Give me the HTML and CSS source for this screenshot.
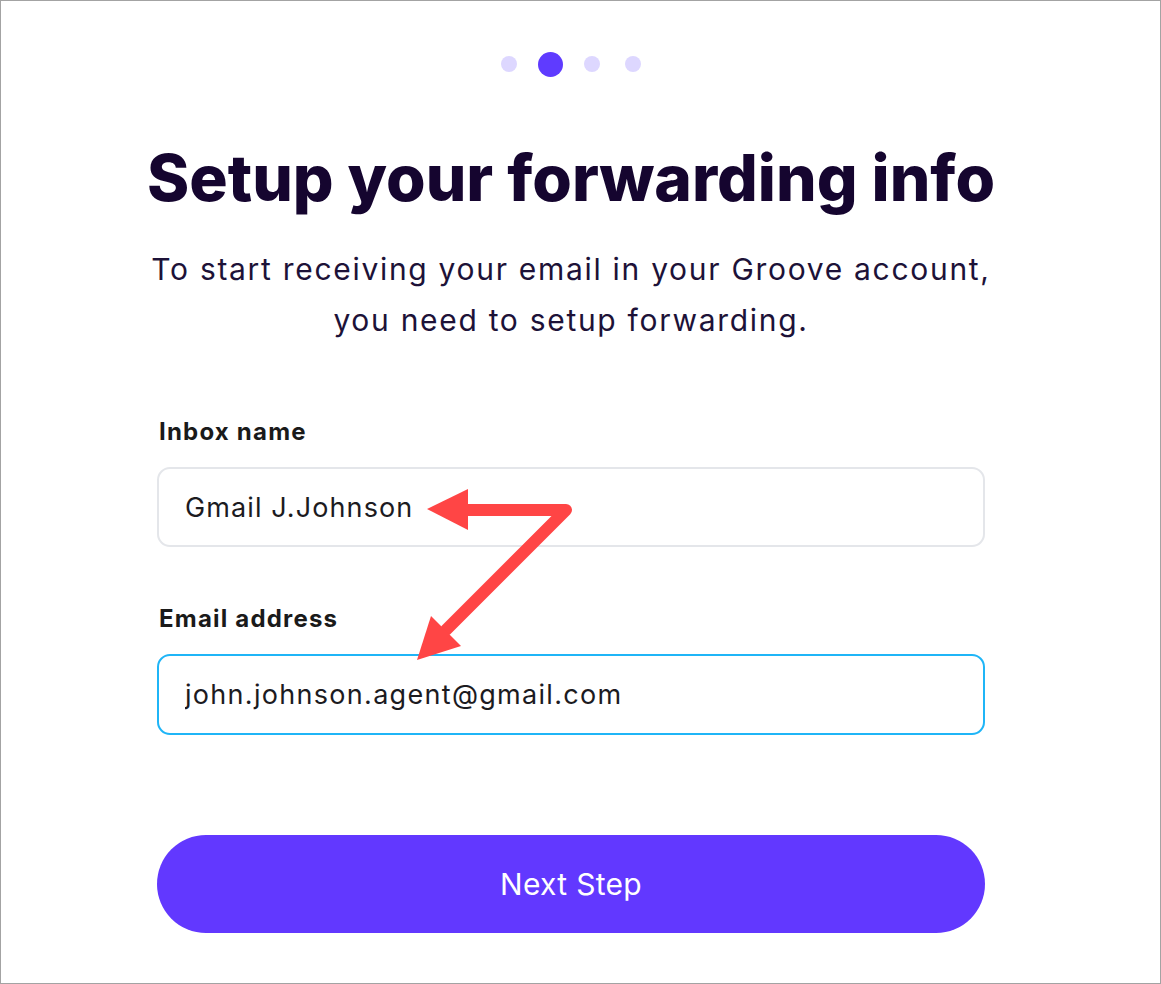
FILE: index.html
```html
<!DOCTYPE html>
<html lang="en">

<head>
    <meta charset="UTF-8">
    <meta name="viewport" content="width=device-width, initial-scale=1.0">
    <title>Setup your forwarding info</title>
    <link rel="stylesheet" href="styles.css">
</head>

<body>

    <div class="frame">
        <div class="wizard">
            <div class="steps">
                <span class="dot"></span>
                <span class="dot active"></span>
                <span class="dot"></span>
                <span class="dot"></span>
            </div>

            <h1>Setup your forwarding info</h1>
            <p class="lead">To start receiving your email in your Groove account,<br>you need to setup forwarding.</p>

            <form class="form">
                <label for="inbox">Inbox name</label>
                <input type="text" id="inbox" value="Gmail J.Johnson">

                <label for="email">Email address</label>
                <input type="text" id="email" class="focused" value="john.johnson.agent@gmail.com">

                <button type="button" id="next">Next Step</button>
            </form>
        </div>

        <!-- annotation arrows -->
        <svg class="arrows" width="1161" height="984" viewBox="0 0 1161 984">
            <polyline points="462,510 566,510 446,630" fill="none" stroke="#ff4545" stroke-width="12"
                stroke-linejoin="round" stroke-linecap="round" />
            <polygon points="427,509 468,489 468,530" fill="#ff4545" />
            <polygon points="417,660 431,616 461,646" fill="#ff4545" />
        </svg>
    </div>

</body>
</html>
```

FILE: styles.css
```css
* {
    box-sizing: border-box;
}

body {
    margin: 0;
    background: #fff;
    font-family: "Inter", "Lato", sans-serif;
    color: #17082f;
}

.frame {
    position: relative;
    width: 1161px;
    height: 984px;
    border: 1px solid #a3a3a3;
    overflow: hidden;
}

.wizard {
    width: 828px;
    margin-left: 156px;
    display: flex;
    flex-direction: column;
    align-items: center;
}

.steps {
    display: flex;
    align-items: center;
    gap: 25px;
    margin-top: 50px;
    height: 26px;
}

.dot {
    width: 16px;
    height: 16px;
    border-radius: 50%;
    background-color: #ddd7ff;
}

.dot.active {
    width: 25px;
    height: 25px;
    margin: 0 -4px;
    background-color: #5f3bff;
}

h1 {
    margin: 61px 0 0;
    font-size: 64px;
    font-weight: 800;
    line-height: 80px;
    white-space: nowrap;
    color: #15052f;
}

.lead {
    margin: 26px 0 0;
    font-size: 30px;
    line-height: 51px;
    letter-spacing: 1.7px;
    text-align: center;
    white-space: nowrap;
    color: #1d1238;
}

.form {
    width: 100%;
    display: flex;
    flex-direction: column;
    margin-top: 71px;
}

label {
    font-size: 24px;
    font-weight: 700;
    color: #1a1a1a;
    line-height: 30px;
    letter-spacing: 1.2px;
    margin-left: 2px;
}

input[type="text"] {
    margin-top: 20px;
    height: 80px;
    padding: 0 26px;
    border: 2px solid #e4e6ea;
    border-radius: 13px;
    font-family: inherit;
    font-size: 27px;
    letter-spacing: 1.1px;
    color: #1c1b1f;
    outline: none;
    margin-bottom: 57px;
}

input.focused {
    height: 81px;
    border-color: #1fb5f7;
    letter-spacing: 1.3px;
    margin-bottom: 100px;
}

#next {
    height: 98px;
    border: none;
    border-radius: 50px;
    background-color: #6238ff;
    color: #fff;
    font-family: inherit;
    font-size: 30px;
    letter-spacing: 0.3px;
    cursor: pointer;
}

.arrows {
    position: absolute;
    left: -1px;
    top: -1px;
    pointer-events: none;
}
```
